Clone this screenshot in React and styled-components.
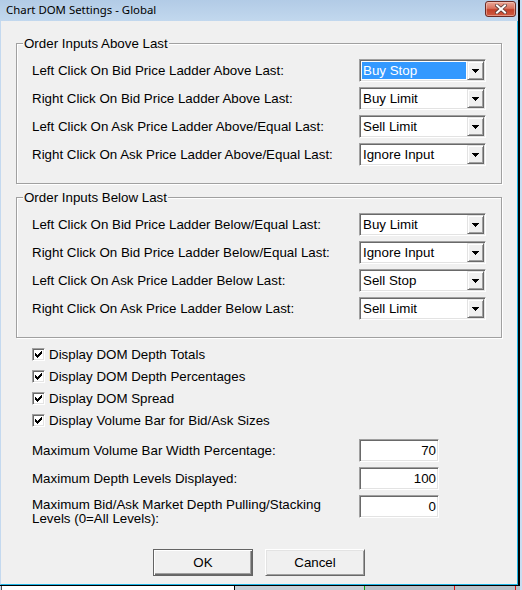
import React from "react";
import styled, { createGlobalStyle } from "styled-components";

const GlobalStyle = createGlobalStyle`
  html, body { margin: 0; padding: 0; }
  body {
    background: #c9ddf1;
    font-family: "Liberation Sans", Arial, sans-serif;
  }
`;

const Screen = styled.div`
  width: 522px;
  height: 590px;
  overflow: hidden;
  display: flex;
  flex-direction: column;
`;

const Window = styled.div`
  width: 520px;
  height: 586px;
  flex: none;
  box-sizing: border-box;
  border-right: 2px solid #000;
  border-bottom: 1px solid #000;
  display: flex;
  flex-direction: column;
`;

const TitleBar = styled.div`
  height: 21px;
  flex: none;
  box-sizing: border-box;
  padding: 0 2px 0 6px;
  display: flex;
  align-items: flex-start;
  justify-content: space-between;
  background: linear-gradient(#b2cbe6, #c2d8ee);
`;

const Title = styled.span`
  font: 11.4px/20px "Noto Sans", "Liberation Sans", sans-serif;
  color: #000;
`;

const CloseButton = styled.div`
  width: 31px;
  height: 16px;
  margin-top: 1px;
  box-sizing: border-box;
  border: 1px solid #6b2a24;
  border-radius: 3px;
  background: linear-gradient(#eaa898 0%, #d9735f 45%, #c3412a 55%, #cf5b42 100%);
  box-shadow: inset 0 0 0 1px rgba(255, 220, 210, 0.45);
  display: flex;
  align-items: center;
  justify-content: center;
`;

const Body = styled.div`
  flex: 1;
  background: #f0f0f0;
  border-left: 1px solid #c4d9ef;
  border-right: 1px solid #1fb5e6;
  border-bottom: 1px solid #1fb5e6;
  padding: 22px 15px 0 15px;
  display: flex;
  flex-direction: column;
  font-size: 13.33px;
  color: #000;
`;

const Group = styled.div`
  position: relative;
  border: 1px solid #a0a0a0;
  box-shadow: 1px 1px 0 #fff, inset 1px 1px 0 #fff;
  padding: 15px 15px 17px 15px;
  display: grid;
  grid-template-columns: 1fr 127px;
  row-gap: 5px;
  align-items: center;

  & + & {
    margin-top: 13px;
  }
`;

const Legend = styled.span`
  position: absolute;
  top: -8px;
  left: 6px;
  padding: 0 1px;
  line-height: 15px;
  background: #f0f0f0;
`;

const RowLabel = styled.span`
  line-height: 15px;
  white-space: nowrap;
`;

const sunken = `
  box-sizing: border-box;
  background: #fff;
  border: 1px solid;
  border-color: #a0a0a0 #fff #fff #a0a0a0;
  box-shadow: inset 1px 1px 0 #696969, inset -1px -1px 0 #e3e3e3;
`;

const Combo = styled.div`
  ${sunken}
  height: 23px;
  padding: 1px;
  display: flex;
`;

const ComboValue = styled.span`
  flex: 1;
  margin: 1px;
  padding-left: 1px;
  line-height: 17px;
  white-space: nowrap;
  background: ${(p) => (p.$focused ? "#3399ff" : "transparent")};
  color: ${(p) => (p.$focused ? "#fff" : "#000")};
`;

const DropButton = styled.span`
  width: 17px;
  flex: none;
  box-sizing: border-box;
  background: #f0f0f0;
  border: 1px solid;
  border-color: #e3e3e3 #696969 #696969 #e3e3e3;
  box-shadow: inset 1px 1px 0 #fff, inset -1px -1px 0 #a0a0a0;
  display: flex;
  align-items: center;
  justify-content: center;
`;

const CheckList = styled.div`
  margin: 5px 0 0 16px;
  display: flex;
  flex-direction: column;
`;

const CheckRow = styled.label`
  height: 22px;
  display: flex;
  align-items: center;
  gap: 4px;
`;

const CheckBox = styled.span`
  ${sunken}
  width: 13px;
  height: 13px;
  flex: none;
  display: flex;
  align-items: center;
  justify-content: center;
`;

const Fields = styled.div`
  margin: 8px 0 0 16px;
  display: grid;
  grid-template-columns: 327px 80px;
  row-gap: 5px;
`;

const FieldLabel = styled.span`
  line-height: 14px;
  align-self: ${(p) => (p.$multi ? "start" : "center")};
  padding-top: ${(p) => (p.$multi ? "3px" : "0")};
`;

const NumberBox = styled.div`
  ${sunken}
  height: 23px;
  padding: 0 2px;
  text-align: right;
  line-height: 21px;
`;

const ButtonRow = styled.div`
  margin-top: 23px;
  display: flex;
  justify-content: center;
  gap: 12px;
`;

const PushButton = styled.div`
  width: 100px;
  height: 27px;
  box-sizing: border-box;
  background: #f0f0f0;
  border: 1px solid;
  border-color: ${(p) => (p.$default ? "#646464" : "#fff #696969 #696969 #fff")};
  box-shadow: ${(p) =>
    p.$default
      ? "inset 1px 1px 0 #fff, inset -1px -1px 0 #696969, inset -2px -2px 0 #a0a0a0"
      : "inset 1px 1px 0 #e3e3e3, inset -1px -1px 0 #a0a0a0"};
  display: flex;
  align-items: center;
  justify-content: center;
`;

const Backdrop = styled.div`
  height: 4px;
  display: flex;
`;

const Cell = styled.span`
  width: ${(p) => p.$w}px;
  flex: none;
  background: ${(p) => p.$c};
`;

const Arrow = () => (
  <svg width="7" height="4" viewBox="0 0 7 4" shapeRendering="crispEdges">
    <path d="M0 0h7v1H0z M1 1h5v1H1z M2 2h3v1H2z M3 3h1v1H3z" fill="#000" />
  </svg>
);

const Tick = () => (
  <svg width="7" height="7" viewBox="0 0 7 7" shapeRendering="crispEdges">
    <path
      d="M6 0h1v1h-1z M5 1h2v1h-2z M0 2h1v1H0z M4 2h3v1h-3z M0 3h2v1H0z M3 3h3v1h-3z M0 4h5v1H0z M1 5h3v1H1z M2 6h1v1H2z"
      fill="#000"
    />
  </svg>
);

const CloseGlyph = () => (
  <svg width="12" height="10" viewBox="0 0 12 10">
    <path d="M2 1.5L10 8.5M10 1.5L2 8.5" stroke="#5a3a36" strokeWidth="3.6" strokeLinecap="square" />
    <path d="M2 1.5L10 8.5M10 1.5L2 8.5" stroke="#fff" strokeWidth="2" strokeLinecap="square" />
  </svg>
);

const aboveRows = [
  ["Left Click On Bid Price Ladder Above Last:", "Buy Stop", true],
  ["Right Click On Bid Price Ladder Above Last:", "Buy Limit"],
  ["Left Click On Ask Price Ladder Above/Equal Last:", "Sell Limit"],
  ["Right Click On Ask Price Ladder Above/Equal Last:", "Ignore Input"],
];

const belowRows = [
  ["Left Click On Bid Price Ladder Below/Equal Last:", "Buy Limit"],
  ["Right Click On Bid Price Ladder Below/Equal Last:", "Ignore Input"],
  ["Left Click On Ask Price Ladder Below Last:", "Sell Stop"],
  ["Right Click On Ask Price Ladder Below Last:", "Sell Limit"],
];

const checks = [
  "Display DOM Depth Totals",
  "Display DOM Depth Percentages",
  "Display DOM Spread",
  "Display Volume Bar for Bid/Ask Sizes",
];

const backdropCells = [
  [1, "#c4d9ef"],
  [1, "#505050"],
  [232, "#ffffff"],
  [1, "#000000"],
  [129, "#c6ced6"],
  [1, "#10a010"],
  [89, "#b8c0c8"],
  [1, "#e01010"],
  [60, "#b8c0c8"],
  [1, "#e01010"],
  [4, "#b8c0c8"],
  [2, "#c9ddf1"],
];

function OrderGroup({ title, rows }) {
  return (
    <Group>
      <Legend>{title}</Legend>
      {rows.map(([label, value, focused]) => (
        <React.Fragment key={label}>
          <RowLabel>{label}</RowLabel>
          <Combo>
            <ComboValue $focused={focused}>{value}</ComboValue>
            <DropButton>
              <Arrow />
            </DropButton>
          </Combo>
        </React.Fragment>
      ))}
    </Group>
  );
}

export default function App() {
  return (
    <Screen>
      <GlobalStyle />
      <Window>
        <TitleBar>
          <Title>Chart DOM Settings - Global</Title>
          <CloseButton>
            <CloseGlyph />
          </CloseButton>
        </TitleBar>
        <Body>
          <OrderGroup title="Order Inputs Above Last" rows={aboveRows} />
          <OrderGroup title="Order Inputs Below Last" rows={belowRows} />
          <CheckList>
            {checks.map((c) => (
              <CheckRow key={c}>
                <CheckBox>
                  <Tick />
                </CheckBox>
                {c}
              </CheckRow>
            ))}
          </CheckList>
          <Fields>
            <FieldLabel>Maximum Volume Bar Width Percentage:</FieldLabel>
            <NumberBox>70</NumberBox>
            <FieldLabel>Maximum Depth Levels Displayed:</FieldLabel>
            <NumberBox>100</NumberBox>
            <FieldLabel $multi>
              Maximum Bid/Ask Market Depth Pulling/Stacking
              <br />
              Levels (0=All Levels):
            </FieldLabel>
            <NumberBox>0</NumberBox>
          </Fields>
          <ButtonRow>
            <PushButton $default>OK</PushButton>
            <PushButton>Cancel</PushButton>
          </ButtonRow>
        </Body>
      </Window>
      <Backdrop>
        {backdropCells.map(([w, c], i) => (
          <Cell key={i} $w={w} $c={c} />
        ))}
      </Backdrop>
    </Screen>
  );
}
